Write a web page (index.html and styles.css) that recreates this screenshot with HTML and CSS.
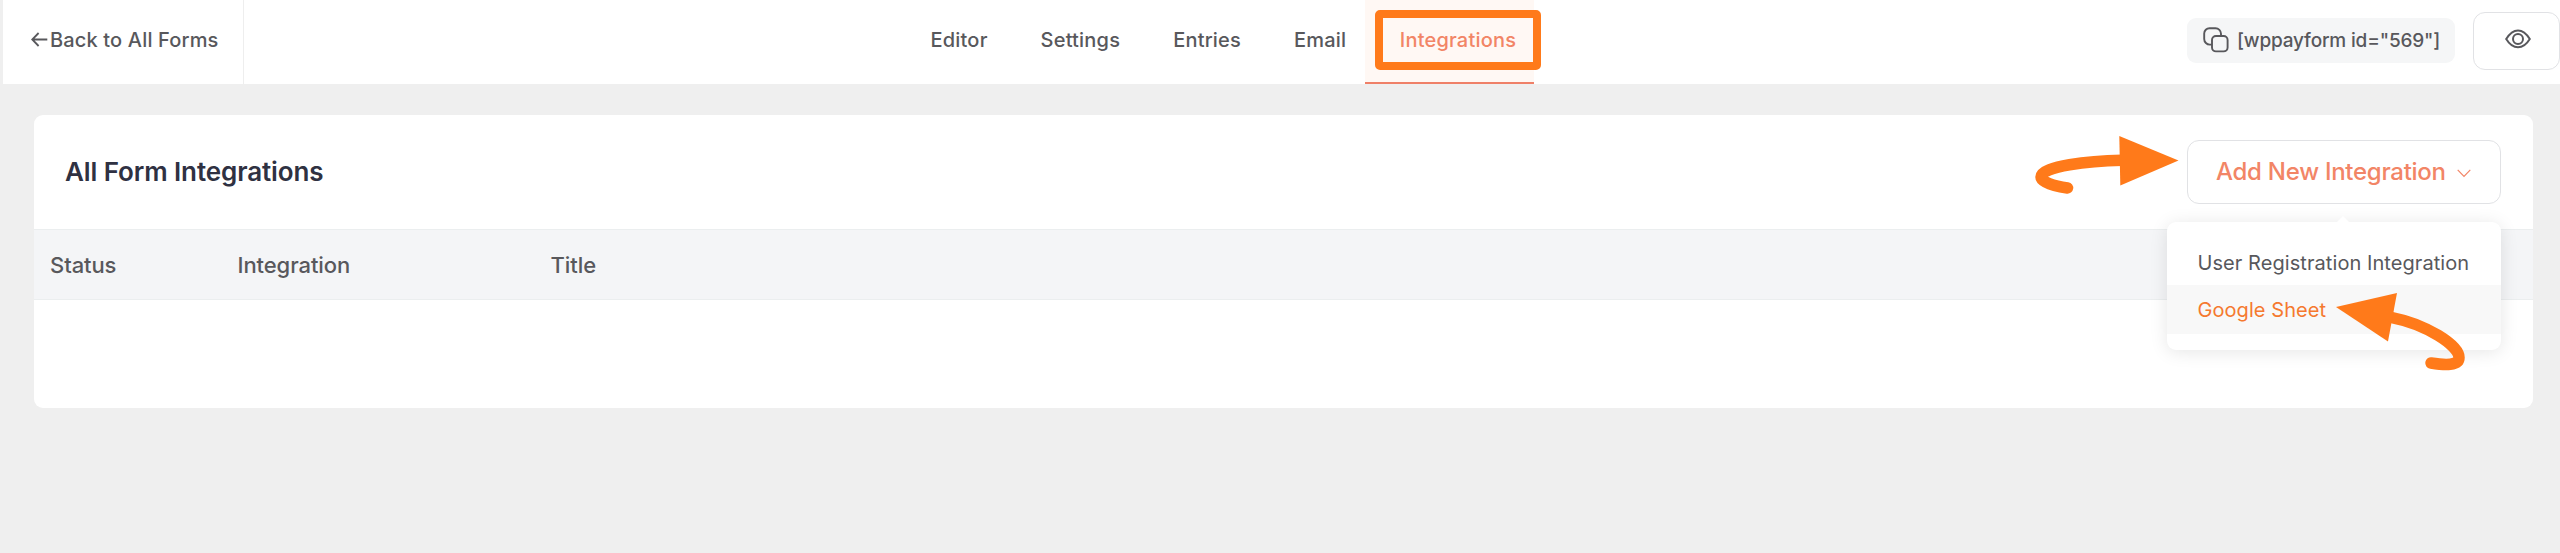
FILE: index.html
```html
<!DOCTYPE html>
<html lang="en">
<head>
<meta charset="utf-8">
<title>All Form Integrations</title>
<link rel="stylesheet" href="styles.css">
</head>
<body>
<header class="topbar">
  <a class="back">
    <svg class="back-icon" viewBox="0 0 17 15"><path d="M16.3 7.5H1.2M7.6 1L1.2 7.5l6.4 6.5"/></svg>
    <span class="back-label">Back to All Forms</span>
  </a>
  <nav class="tabs">
    <a class="tab">Editor</a>
    <a class="tab">Settings</a>
    <a class="tab">Entries</a>
    <a class="tab">Email</a>
    <a class="tab tab-active">Integrations<span class="marker"></span></a>
  </nav>
  <div class="tools">
    <div class="shortcode">
      <svg class="copy-icon" viewBox="0 0 26 26"><path d="M9 17.6H7A5.6 5.6 0 0 1 1.2 12V6.500A5.300 5.300 0 0 1 6.500 1.200H12.500A5.500 5.500 0 0 1 18 6.700V9"/><rect x="9" y="9" width="15.600" height="15.400" rx="4"/></svg>
      <span>[wppayform id="569"]</span>
    </div>
    <button class="preview">
      <svg class="eye-icon" viewBox="0 0 26 20"><path d="M1.200 10C4.500 4.600 8.300 1.400 13 1.400S21.500 4.600 24.800 10C21.500 15.400 17.700 18.300 13 18.300S4.500 15.400 1.200 10Z"/><circle cx="13" cy="9.900" r="5"/></svg>
    </button>
  </div>
</header>
<main class="card">
  <div class="card-head">
    <h1 class="card-title">All Form Integrations</h1>
    <div class="dropdown">
      <button class="add-button">
        <span>Add New Integration</span>
        <svg class="chevron" viewBox="0 0 14 9"><path d="M.7.8L7 7.300 13.300.8"/></svg>
      </button>
      <ul class="menu">
        <li class="menu-item">User Registration Integration</li>
        <li class="menu-item menu-item-hover">Google Sheet</li>
      </ul>
    </div>
  </div>
  <div class="table-head">
    <span>Status</span>
    <span>Integration</span>
    <span>Title</span>
  </div>
  <div class="table-body"></div>
</main>
<svg class="arrows" viewBox="2020 120 540 260">
  <path class="arrow-tail" d="M2122 160.300C2090 161 2041 166 2041 177C2041 182 2054 186 2067.500 188"/>
  <path class="arrow-tip" d="M2119.300 136L2178.500 160.500 2120.300 185.500Z"/>
  <path class="arrow-tail" d="M2393 317.800C2425 324 2459 345 2459 357.500C2459 366 2445 365.200 2431 363"/>
  <path class="arrow-tip" d="M2336 307L2397 293 2388 341.500Z"/>
</svg>
</body>
</html>
```

FILE: styles.css
```css
* { box-sizing: border-box; }

html { background: #efefef; }

body {
  position: relative;
  margin: 0;
  height: 553px;
  overflow: hidden;
  background: #efefef;
  color: #58585c;
  font-family: Inter, "Liberation Sans", sans-serif;
  font-size: 20px;
  font-weight: 500;
}

svg { display: block; fill: none; stroke: currentColor; flex: none; }

button { margin: 0; font: inherit; background: #fff; border: 1px solid #e1e2e5; }

.topbar {
  display: grid;
  grid-template-columns: 241px 1fr auto;
  height: 84px;
  margin-left: 3px;
  background: #fff;
}

.back {
  display: flex;
  align-items: center;
  padding: 0 0 4px 28px;
  border-right: 1px solid #eee;
}

.back-icon { width: 17px; height: 15px; margin: 0 2px 2px 0; stroke-width: 1.800; }
.back-label { letter-spacing: .16px; white-space: nowrap; }

.tabs { display: flex; padding-left: 660px; letter-spacing: .2px; }

.tab {
  display: flex;
  align-items: center;
  padding: 0 26.500px 4px;
}

.tab-active {
  position: relative;
  width: 169px;
  margin-left: -8px;
  padding: 0 0 2px 35px;
  color: #f28566;
  background: #fff8f4;
  border-bottom: 2px solid #ef8068;
}

.marker {
  position: absolute;
  left: 10px;
  top: 10px;
  width: 166px;
  height: 60px;
  border: 8px solid #ff7a1a;
  border-radius: 5px;
}

.tools { display: flex; align-items: flex-start; gap: 18px; }

.shortcode {
  display: flex;
  align-items: center;
  gap: 8px;
  width: 268px;
  height: 45px;
  margin: 18px 0 0 1px;
  padding: 0 0 1px 16px;
  font-size: 19px;
  letter-spacing: -.17px;
  white-space: nowrap;
  background: #f5f6f7;
  border-radius: 9px;
}

.copy-icon { width: 26px; height: 26px; stroke-width: 1.900; }

.preview {
  display: flex;
  justify-content: center;
  width: 87px;
  height: 58px;
  margin-top: 12px;
  padding: 16px 0 0 2px;
  color: #58585c;
  border-radius: 12px;
}

.eye-icon { width: 26px; height: 20px; stroke-width: 2; }

.card {
  width: 2499px;
  height: 293px;
  margin: 31px 0 0 34px;
  background: #fff;
  border-radius: 9px;
}

.card-head {
  display: flex;
  justify-content: space-between;
  height: 114px;
  padding: 25px 32px 0 31px;
}

.card-title {
  margin: 16px 0 0;
  color: #2f3142;
  font-size: 26px;
  font-weight: 600;
  line-height: 32px;
  letter-spacing: -.1px;
}

.dropdown { position: relative; }

.add-button {
  display: flex;
  align-items: center;
  gap: 11px;
  width: 314px;
  height: 64px;
  padding: 0 0 2px 28px;
  color: #f28566;
  font-size: 24px;
  letter-spacing: -.27px;
  white-space: nowrap;
  border-radius: 12px;
}

.chevron { width: 14px; height: 9px; margin-top: 4px; stroke-width: 1.200; }

.menu {
  position: absolute;
  top: 82px;
  right: 0;
  width: 334px;
  height: 128px;
  margin: 0;
  padding: 14px 0 0;
  list-style: none;
  font-weight: 400;
  letter-spacing: .07px;
  white-space: nowrap;
  background: #fff;
  border-radius: 9px;
  box-shadow: 0 2px 18px rgba(0, 0, 0, .1);
}

.menu::before {
  content: "";
  position: absolute;
  top: -6px;
  left: 170px;
  border: solid transparent;
  border-width: 0 6px 6px;
  border-bottom-color: #fff;
}

.menu-item { height: 49px; padding-left: 30.500px; line-height: 54px; }
.menu-item-hover { line-height: 51px; color: #f5792f; background: #f8f8f8; }

.table-head {
  display: grid;
  grid-template-columns: 187.500px 313px 1fr;
  align-items: center;
  height: 71px;
  padding: 0 0 0 16px;
  font-size: 22px;
  letter-spacing: -.08px;
  background: #f4f5f7;
  border: solid #ebeeef;
  border-width: 1px 0;
}

.arrows {
  position: absolute;
  left: 2020px;
  top: 120px;
  width: 540px;
  height: 260px;
}

.arrow-tail { stroke: #ff7a1a; stroke-width: 11.500; stroke-linecap: round; }
.arrow-tip { fill: #ff7a1a; stroke: none; }
```
